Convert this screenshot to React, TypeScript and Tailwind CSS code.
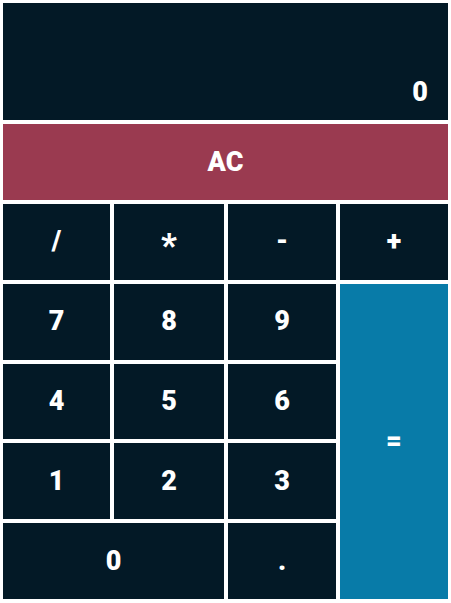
const KEYS: { label: string; cls?: string; bg?: string }[] = [
  { label: "/" },
  { label: "*", cls: "text-[34px] pt-2" },
  { label: "-" },
  { label: "+", cls: "text-[20px]" },
  { label: "7" },
  { label: "8" },
  { label: "9" },
  { label: "=", cls: "row-span-4", bg: "bg-[#087ba8]" },
  { label: "4" },
  { label: "5" },
  { label: "6" },
  { label: "1" },
  { label: "2" },
  { label: "3" },
  { label: "0", cls: "col-span-2" },
  { label: "." },
];

export default function App() {
  return (
    <div
      className="grid h-[603px] w-[451px] grid-cols-[107px_110px_108px_108px] grid-rows-[117px_repeat(6,1fr)] gap-1 bg-white pt-[3px] pr-[3px] pb-[4px] pl-[3px] text-white"
      style={{ fontFamily: 'Roboto, "Liberation Sans", sans-serif' }}
    >
      {/* 表示部 */}
      <div className="col-span-4 flex items-end justify-end bg-[#031926] pr-5 pb-2 text-[27px] font-black">
        0
      </div>
      <button className="col-span-4 bg-[#9a3a50] text-[27px] font-black">AC</button>
      {KEYS.map((k) => (
        <button
          key={k.label}
          className={`flex items-center justify-center text-[27px] font-black ${k.bg ?? "bg-[#031926]"} ${k.cls ?? ""}`}
        >
          {k.label}
        </button>
      ))}
    </div>
  );
}
